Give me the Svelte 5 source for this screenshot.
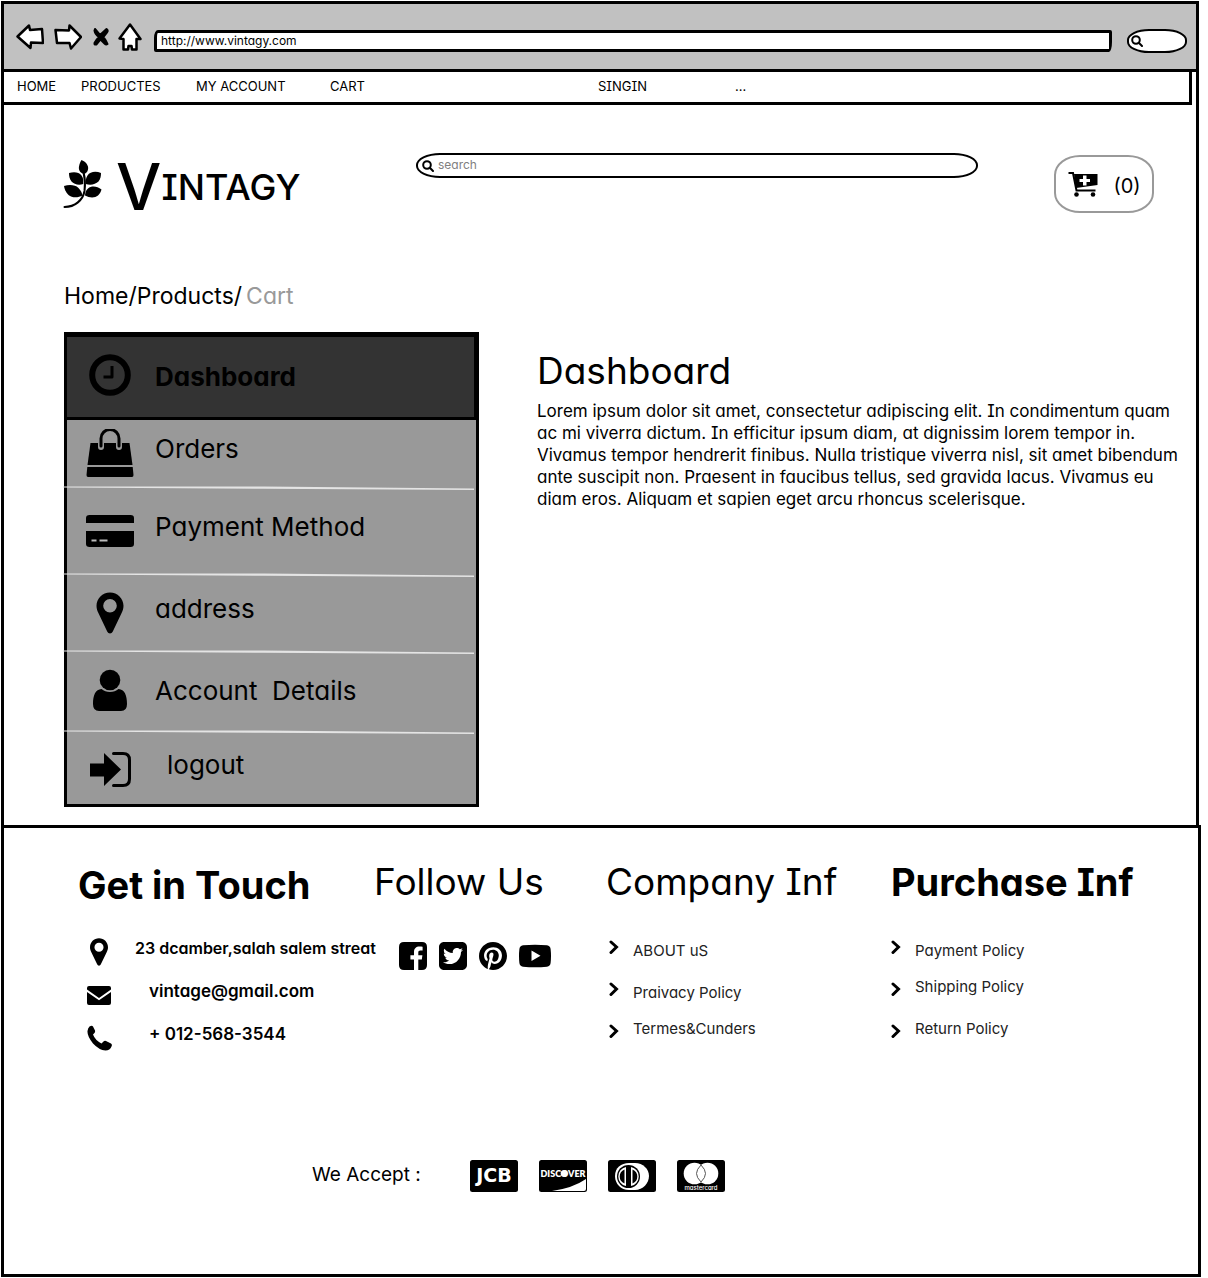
<script>
  const nav = ['HOME', 'PRODUCTES', 'MY ACCOUNT', 'CART', 'SINGIN', '...'];

  const account = [
    { label: 'Dashboard', icon: 'clock', size: 'h85', active: true },
    { label: 'Orders', icon: 'bag', size: 'h69' },
    { label: 'Payment Method', icon: 'card', size: 'h87' },
    { label: 'address', icon: 'pin', size: 'h77' },
    { label: 'Account  Details', icon: 'user', size: 'h80' },
    { label: 'logout', icon: 'exit', size: 'h71', indent: true }
  ];

  const contacts = [
    { label: '23 dcamber,salah salem streat', icon: 'pin' },
    { label: 'vintage@gmail.com', icon: 'mail', href: 'mailto:vintage@gmail.com' },
    { label: '+ 012-568-3544', icon: 'phone', href: 'tel:0125683544' }
  ];

  const company = [
    { label: 'ABOUT uS', shift: 'low' },
    { label: 'Praivacy Policy', shift: 'low' },
    { label: 'Termes&Cunders', shift: 'high' }
  ];

  const purchase = [
    { label: 'Payment Policy', shift: 'low' },
    { label: 'Shipping Policy', shift: 'high' },
    { label: 'Return Policy', shift: 'high' }
  ];
</script>

{#snippet magnifier()}
  <svg class="magnifier" viewBox="0 0 12 12" aria-hidden="true">
    <circle cx="5" cy="5" r="3.8" />
    <path d="M7.8 7.8L11 11" />
  </svg>
{/snippet}

{#snippet links(list, flush)}
  <ul class="links" class:flush>
    {#each list as item}
      <li>
        <svg class="chevron" viewBox="0 0 10 14" aria-hidden="true"><path d="M2 2L7.5 7L2 12.5" /></svg>
        <a class={item.shift} href="#top">{item.label}</a>
      </li>
    {/each}
  </ul>
{/snippet}

{#snippet pin()}
  <svg viewBox="0 0 48 48" aria-hidden="true">
    <path fill-rule="evenodd" d="M24 3.5c-7.600 0-13.500 6-13.500 13.300 0 3 .8 5 2 7.500l8.700 18.200c1.200 2.600 4.400 2.600 5.600 0l8.700-18.200c1.200-2.500 2-4.500 2-7.500C37.500 9.500 31.600 3.500 24 3.500zm0 6.500a6.800 6.800 0 1 1 0 13.600a6.800 6.800 0 1 1 0-13.600z" />
  </svg>
{/snippet}

<div class="page" id="top">
  <div class="window">
    <header class="chrome">
      <div class="buttons">
        <button aria-label="Back">
          <svg width="28" height="26" viewBox="0 0 28 26"><path class="outline" d="M1.500 12.500L13 1.500L14 6L26 5L27 19L15 18.500L14.500 24z" /></svg>
        </button>
        <button aria-label="Forward">
          <svg width="28" height="26" viewBox="0 0 28 26"><path class="outline" d="M1.500 6L15 6.500L15.500 1.500L27 13L17 24.500L15.500 19L3 19z" /></svg>
        </button>
        <button aria-label="Stop" class="stop">
          <svg width="18" height="22" viewBox="0 0 18 22"><path class="cross" d="M3 3L8 9L14.500 3Q16.500 4.500 15 6.500L11.500 11Q14.500 15 15.500 18Q14 19 12.500 17.500L8.500 13.500L4.500 18.500Q2 19 2.500 17Q4 14 7 11Q3 8 2.500 4.500z" /></svg>
        </button>
        <button aria-label="Home">
          <svg width="24" height="28" viewBox="0 0 24 28"><path class="outline" d="M12 1.500L22.500 16L18.500 16L18.500 26.500L14 26.500L13.500 23L10.500 23L10 26.500L5.500 26.500L5.500 16L1.500 15.500z" /></svg>
        </button>
      </div>
      <input class="address" aria-label="Address" value="http://www.vintagy.com" />
      <label class="quick">
        {@render magnifier()}
        <input aria-label="Quick search" />
      </label>
    </header>

    <nav class="menu" aria-label="Main">
      {#each nav as item}<a href="#top">{item}</a>{/each}
    </nav>

    <main>
      <div class="masthead">
        <a class="logo" href="#top" aria-label="Vintagy">
          <svg class="leaf" width="40" height="50" viewBox="0 0 40 50" aria-hidden="true">
            <path class="stem" d="M1.500 47C12 47 20 40 21.500 31C22.500 24 22 18 20.500 12" />
            <path d="M18.500 0C22.500 1.500 26 5.500 25 9.500C24.500 12 23 13.500 20.500 14C16.500 12.500 15.500 9.500 16 6.500C16.500 3.500 17.500 1.500 18.500 0z" />
            <path d="M6 13C11 11.500 16 12 18.500 15.500C20.500 18 20.500 21 20.300 24C16 25.500 11 24.500 8.500 21.500C6.500 19 6 16 6 13z" />
            <path d="M38 13C33 11 27 11.500 24.500 15.500C22.800 18 22.500 21 22.700 24C27.500 25.500 32.500 24.500 35.500 21.500C37.500 19 38 16 38 13z" />
            <path d="M1 26C6 24.500 12 24.500 15.500 28C18 30.500 19 33 19.500 35.500C15 38 9 38 5.500 35C2.500 32 1.500 29 1 26z" />
            <path d="M38.500 29.500C34 26 28.500 25.500 25 28.500C22.800 30.500 22 33 22 35.500C26.500 38 32 38 35 35.500C37 33.500 38 31.500 38.500 29.500z" />
          </svg>
          <span class="initial">V</span><span class="rest">INTAGY</span>
        </a>
        <label class="search">
          {@render magnifier()}
          <input type="search" placeholder="search" aria-label="Search" />
        </label>
        <button class="cart" aria-label="Cart, 0 items">
          <svg width="32" height="28" viewBox="0 0 32 28" aria-hidden="true">
            <path class="rail" d="M1.500 3H6L9.500 20.500H28.500" />
            <path fill-rule="evenodd" d="M7 4H30.500V15L9 18zM16 5.500V9H12.500V12H16V15.500H19.500V12H23V9H19.500V5.500z" />
            <circle cx="9.500" cy="24.500" r="2.300" /><circle cx="26" cy="24.500" r="2.300" />
          </svg>
          <span>(0)</span>
        </button>
      </div>

      <nav class="crumbs" aria-label="Breadcrumb">
        <a href="#top">Home</a>/<a href="#top">Products</a>/<span>Cart</span>
      </nav>

      <div class="content">
        <nav class="sidebar" aria-label="Account">
          {#each account as item, i}
            <a href="#top" class="{item.size}" class:active={item.active} class:indent={item.indent}>
              {#if item.icon === 'pin'}
                {@render pin()}
              {:else}
                <svg viewBox="0 0 48 48" aria-hidden="true">
                  {#if item.icon === 'clock'}
                    <circle class="line thick" cx="24" cy="24" r="17.800" />
                    <path class="line" d="M26 15V26H17.500" />
                  {:else if item.icon === 'bag'}
                    <path d="M4.500 14H43.500L46.500 36H1.500z" />
                    <path d="M1.300 38H46.700L47.500 46Q47.500 48 46 48H2Q.5 48 .5 46z" />
                    <path class="halo" d="M15 18V9.500a9 9 0 0 1 18 0V18" />
                    <path class="line thin" d="M15 17V9.500a9 9 0 0 1 18 0V17" />
                  {:else if item.icon === 'card'}
                    <path d="M3.500 8H44.500Q48 8 48 11V16H0V11Q0 8 3.500 8z" />
                    <path d="M0 24H48V37Q48 40 44.500 40H3.500Q0 40 0 37z" />
                    <path class="cut" d="M5.500 33.500H10.500M13.500 33.500H21.500" />
                  {:else if item.icon === 'user'}
                    <circle cx="24" cy="13" r="10.300" />
                    <path d="M15.500 22Q19 25 24 25T32.500 22C38.500 22.500 41 28 41 37Q41 44 35 44H13Q7 44 7 37C7 28 9.500 22.500 15.500 22z" />
                  {:else}
                    <path d="M4 18.500H18V8L35 24.500L18 41V31.500H4z" />
                    <path class="line thin" d="M27.500 8.500H37Q43.500 8.500 43.500 15V34Q43.500 40.500 37 40.500H27.500" />
                  {/if}
                </svg>
              {/if}
              <span>{item.label}</span>
              {#if i > 0 && i < account.length - 1}
                <svg class="rule" viewBox="0 0 410 4" preserveAspectRatio="none" aria-hidden="true">
                  <path d="M0 .5L200 .5L410 2.500V4L200 2.700L0 1.500z" />
                </svg>
              {/if}
            </a>
          {/each}
        </nav>

        <article>
          <h1>Dashboard</h1>
          <p>
            Lorem ipsum dolor sit amet, consectetur adipiscing elit. In condimentum quam<br />
            ac mi viverra dictum. In efficitur ipsum diam, at dignissim lorem tempor in.<br />
            Vivamus tempor hendrerit finibus. Nulla tristique viverra nisl, sit amet bibendum<br />
            ante suscipit non. Praesent in faucibus tellus, sed gravida lacus. Vivamus eu<br />
            diam eros. Aliquam et sapien eget arcu rhoncus scelerisque.
          </p>
        </article>
      </div>
    </main>
  </div>

  <footer>
    <div class="columns">
      <section class="touch">
        <h2 class="bold">Get in Touch</h2>
        <ul class="contacts">
          {#each contacts as item}
            <li>
              {#if item.icon === 'pin'}
                {@render pin()}
              {:else if item.icon === 'mail'}
                <svg viewBox="0 0 26 26" aria-hidden="true">
                  <path d="M1 6Q1 4 3 4H23Q25 4 25 6V7.500L13 16L1 7.500zM1 10L13 18.300L25 10V21Q25 23 23 23H3Q1 23 1 21z" />
                </svg>
              {:else}
                <svg viewBox="0 0 26 26" aria-hidden="true">
                  <path d="M3.500 1.500Q6 0 7 1.500L9 5.500Q9.500 7 8 8.500L7 9.500Q9 15 15.500 18.500L17.500 16.500Q18.500 15.500 20 16L25 18.500Q26.500 19.500 25.500 21.500Q24 25.500 19.500 25.500Q13 25 7 18.500Q1 11 1.500 6Q1.800 3 3.500 1.500z" />
                </svg>
              {/if}
              {#if item.href}<a href={item.href}>{item.label}</a>{:else}<span>{item.label}</span>{/if}
            </li>
          {/each}
        </ul>
      </section>

      <section>
        <h2>Follow Us</h2>
        <div class="social">
          <a href="#top" aria-label="Facebook">
            <svg width="28" height="28" viewBox="0 0 28 28"><path fill-rule="evenodd" d="M5 0H23Q28 0 28 5V23Q28 28 23 28H19.300V17.500H22.800L23.400 13.300H19.300V10.500C19.300 9.200 19.800 8.500 21.400 8.500H23.600V4.700C23.200 4.600 21.800 4.500 20.400 4.500C17.200 4.500 15 6.400 15 9.900V13.300H11.400V17.500H15V28H5Q0 28 0 23V5Q0 0 5 0z" /></svg>
          </a>
          <a href="#top" aria-label="Twitter">
            <svg width="28" height="28" viewBox="0 32 448 448"><path d="M368 32H80C36 32 0 68 0 112v288c0 44 36 80 80 80h288c44 0 80-36 80-80V112c0-44-36-80-80-80zm-16.900 158.800c.2 2.800.2 5.700.2 8.500 0 86.700-66 186.600-186.600 186.600-37.200 0-71.700-10.800-100.700-29.400 5.300.6 10.400.8 15.800.8 30.700 0 58.900-10.400 81.400-28-28.800-.6-53-19.500-61.300-45.500 10.100 1.500 19.200 1.500 29.600-1.200-30-6.100-52.500-32.500-52.500-64.400v-.8c8.700 4.900 18.900 7.900 29.600 8.300a65.447 65.447 0 0 1-29.200-54.600c0-12.200 3.200-23.400 8.900-33.100 32.300 39.800 80.800 65.800 135.200 68.600-9.300-44.500 24-80.600 64-80.600 18.900 0 35.900 7.900 47.900 20.700 14.800-2.800 29-8.300 41.600-15.800-4.900 15.200-15.200 28-28.800 36.100 13.200-1.400 26-5.100 37.800-10.200-8.900 13.100-20.100 24.700-32.900 34z" /></svg>
          </a>
          <a href="#top" aria-label="Pinterest">
            <svg width="28" height="28" viewBox="0 8 496 496"><path d="M496 256c0 137-111 248-248 248-25.600 0-50.200-3.900-73.400-11.100 10.100-16.500 25.200-43.500 30.800-65 3-11.600 15.400-59 15.400-59 8.100 15.400 31.700 28.500 56.800 28.500 74.800 0 128.700-68.800 128.700-154.300 0-81.900-66.900-143.200-152.900-143.200-107 0-163.900 71.800-163.900 150.100 0 36.400 19.400 81.700 50.300 96.100 4.700 2.200 7.200 1.200 8.300-3.300.8-3.400 5-20.300 6.900-28.100.6-2.500.3-4.700-1.700-7.100-10.100-12.500-18.300-35.300-18.300-56.600 0-54.700 41.400-107.600 112-107.600 60.900 0 103.600 41.500 103.600 100.900 0 67.100-33.900 113.600-78 113.600-24.300 0-42.600-20.100-36.700-44.800 7-29.500 20.500-61.300 20.500-82.600 0-19-10.200-34.900-31.400-34.900-24.900 0-44.900 25.700-44.900 60.200 0 22 7.400 36.800 7.400 36.800s-24.500 103.800-29 123.200c-5 21.400-3 51.600-.9 71.200C65.400 450.900 0 361.100 0 256 0 119 111 8 248 8s248 111 248 248z" /></svg>
          </a>
          <a href="#top" aria-label="YouTube">
            <svg width="32" height="24" viewBox="0 0 32 24"><path fill-rule="evenodd" d="M4 1.300Q16 0 28 1.300Q31.200 1.700 31.600 5Q32.400 12 31.600 19Q31.200 22.200 28 22.700Q16 24 4 22.700Q.8 22.200.4 19Q-.4 12 .4 5Q.8 1.700 4 1.300zM12.500 6.500V17L21.500 11.800z" /></svg>
          </a>
        </div>
      </section>

      <section>
        <h2>Company Inf</h2>
        {@render links(company, false)}
      </section>

      <section>
        <h2 class="bold">Purchase Inf</h2>
        {@render links(purchase, true)}
      </section>
    </div>

    <div class="payments">
      <span>We Accept :</span>
      <svg viewBox="0 0 48 32" role="img" aria-label="JCB">
        <rect width="48" height="32" rx="2.500" />
        <text class="jcb" x="24" y="22">JCB</text>
      </svg>
      <svg viewBox="0 0 48 32" role="img" aria-label="Discover">
        <rect width="48" height="32" rx="2.500" />
        <text class="discover" x="24" y="17">DISCOVER</text>
        <circle class="white" cx="25" cy="13.500" r="3.300" />
        <path class="white" d="M13 31Q34 28 47 19V29Q47 31 45 31z" />
      </svg>
      <svg viewBox="0 0 48 32" role="img" aria-label="Diners Club">
        <rect width="48" height="32" rx="2.500" />
        <path class="white" d="M21 3H27C35 3 41 9 41 16S35 30 27 30H21C13 30 7 24 7 16S13 3 21 3z" />
        <circle cx="20.500" cy="16.500" r="11.500" />
        <path class="white" d="M18 7V26A9.700 9.700 0 0 1 18 7zM23 7V26A9.700 9.700 0 0 0 23 7z" />
        <path d="M16.500 9.500V23.500A7.500 7.500 0 0 1 16.500 9.500zM24.500 9.500V23.500A7.500 7.500 0 0 0 24.500 9.500z" />
      </svg>
      <svg viewBox="0 0 48 32" role="img" aria-label="MasterCard">
        <rect width="48" height="32" rx="2.500" />
        <circle class="white" cx="17.500" cy="13.500" r="10.800" />
        <circle class="white" cx="30.500" cy="13.500" r="10.800" />
        <path class="lens" d="M24 5Q19.500 9.500 19.500 13.500T24 22Q28.500 17.500 28.500 13.500T24 5z" />
        <text class="master" x="24" y="30">mastercard</text>
      </svg>
    </div>
  </footer>
</div>

<style>
  :global(body) {
    background: #fff;
  }

  .page,
  .page button,
  .page input {
    font-family: Inter, 'Liberation Sans', sans-serif;
    font-feature-settings: 'cv11', 'cv08';
    color: #000;
  }

  .page {
    padding: 1px 7px 1px 1px;
  }

  .page *,
  .page {
    box-sizing: border-box;
  }

  a {
    color: inherit;
    text-decoration: none;
  }

  ul {
    list-style: none;
    margin: 0;
    padding: 0;
  }

  button {
    background: none;
    border: 0;
    padding: 0;
  }

  svg {
    display: block;
    flex: none;
  }

  input {
    background: none;
    border: 0;
    outline: 0;
    padding: 0;
    min-width: 0;
  }

  .window {
    margin-right: 2px;
    border: 3px solid #000;
    border-bottom: 0;
  }

  /* browser chrome */
  .chrome {
    display: flex;
    align-items: center;
    height: 68px;
    padding: 8px 9px 0 12px;
    background: #c1c1c1;
    border-bottom: 3px solid #000;
  }

  .buttons {
    display: flex;
    align-items: center;
    gap: 10px;
    padding-bottom: 8px;
    margin-right: 12px;
  }

  .stop {
    margin-right: -2px;
  }

  .cross {
    stroke: #000;
    stroke-width: 2;
    stroke-linejoin: round;
  }

  .outline {
    fill: #fff;
    stroke: #000;
    stroke-width: 2.5;
    stroke-linejoin: round;
  }

  .address {
    flex: 1;
    height: 22px;
    padding: 0 4px;
    border: 3px solid #000;
    border-radius: 4px 2px 3px 2px / 8px 2px 10px 2px;
    background: #fff;
    font-size: 12px;
  }

  .quick {
    display: flex;
    align-items: center;
    width: 60px;
    height: 24px;
    margin-left: 15px;
    padding-left: 2px;
    border: 2px solid #000;
    border-radius: 22px / 11px;
    background: #fff;
  }

  .quick input {
    width: 100%;
  }

  .magnifier {
    width: 12px;
    height: 12px;
    fill: none;
    stroke: #000;
    stroke-width: 2;
    stroke-linecap: round;
  }

  /* site menu */
  .menu {
    display: grid;
    grid-template-columns: 64px 115px 134px 268px 137px 1fr;
    align-items: center;
    height: 36px;
    margin: -3px 4px 0 -3px;
    padding: 0 0 2px 13px;
    border: 3px solid #000;
    background: #fff;
    font-size: 13px;
  }

  main {
    padding: 48px 0 18px 60px;
  }

  .masthead {
    display: grid;
    grid-template-columns: 352px minmax(0, 562px) 1fr;
    height: 62px;
    margin-right: 42px;
  }

  .logo {
    display: flex;
    align-items: center;
    height: 68px;
    margin-right: auto;
    line-height: 68px;
    font-weight: 500;
  }

  .leaf {
    margin: 0 13px 4px -1px;
  }

  .initial {
    font-size: 64px;
  }

  .rest {
    font-size: 36px;
  }

  .search {
    display: flex;
    align-items: center;
    gap: 4px;
    height: 25px;
    padding-left: 4px;
    border: 2px solid #000;
    border-radius: 24px / 12px;
  }

  .search input {
    flex: 1;
    font-size: 12px;
    padding-bottom: 2px;
  }

  .search input::placeholder {
    color: #808080;
    opacity: 1;
  }

  .cart {
    display: flex;
    align-items: center;
    justify-content: center;
    gap: 14px;
    width: 100px;
    height: 58px;
    margin: 2px 0 0 auto;
    border: 2px solid #999;
    border-radius: 26px / 20px;
    font-size: 20px;
  }

  .cart span {
    padding-top: 4px;
  }

  .rail {
    fill: none;
    stroke: #000;
    stroke-width: 2;
  }

  .stem {
    fill: none;
    stroke: #000;
    stroke-width: 2;
    stroke-linecap: round;
  }

  .crumbs {
    margin: 66px 0 21px;
    font-size: 23px;
    line-height: 30px;
  }

  .crumbs span {
    margin-left: 4px;
    color: #999;
  }

  .content {
    display: grid;
    grid-template-columns: 415px 1fr;
    column-gap: 58px;
  }

  /* account menu */
  .sidebar {
    border: 3px solid #000;
    background: #999;
  }

  .sidebar a {
    position: relative;
    display: flex;
    align-items: center;
    gap: 21px;
    padding: 0 0 4px 19px;
    font-size: 26px;
    line-height: 32px;
    white-space: pre;
  }

  .sidebar a > svg:first-child {
    width: 48px;
    height: 48px;
  }

  .sidebar span {
    padding-bottom: 8px;
  }

  .sidebar .active {
    border: 2px solid #000;
    border-width: 2px 2px 3px 0;
    background: #333;
    font-weight: 700;
  }

  .sidebar .active span {
    padding: 4px 0 0;
  }

  .sidebar .h80 span {
    padding: 0;
  }

  .sidebar .indent {
    gap: 33px;
    padding-bottom: 0;
  }

  .h85 {
    height: 85px;
  }

  .h69 {
    height: 69px;
  }

  .h87 {
    height: 87px;
  }

  .h77 {
    height: 77px;
  }

  .h80 {
    height: 80px;
  }

  .h71 {
    height: 71px;
  }

  .rule {
    position: absolute;
    left: -4px;
    bottom: -1px;
    width: calc(100% + 2px);
    height: 4px;
    fill: #e4e4e4;
  }

  .line {
    fill: none;
    stroke: #000;
    stroke-width: 3;
    stroke-linejoin: round;
  }

  .thick {
    stroke-width: 6;
  }

  .thin {
    stroke-width: 3;
    stroke-linecap: round;
  }

  .halo {
    fill: none;
    stroke: #999;
    stroke-width: 6;
    stroke-linecap: round;
  }

  .cut {
    fill: none;
    stroke: #bbb;
    stroke-width: 2;
  }

  h1,
  h2 {
    margin: 0;
    font-size: 37px;
    font-weight: 400;
  }

  h1 {
    margin-top: 17px;
    line-height: 44px;
  }

  article p {
    margin: 7px 0 0;
    font-size: 17px;
    line-height: 22px;
  }

  footer {
    padding: 31px 0 82px 74px;
    border: 3px solid #000;
    background: #fff;
  }

  .columns {
    display: grid;
    grid-template-columns: 296px 232px 285px 1fr;
    height: 194px;
  }

  h2 {
    line-height: 46px;
    white-space: nowrap;
  }

  .bold {
    font-size: 38px;
    font-weight: 700;
  }

  .touch {
    padding-top: 3px;
  }

  .contacts {
    margin-top: 22px;
    padding-left: 8px;
  }

  .contacts li {
    display: flex;
    align-items: center;
    gap: 23px;
    height: 43px;
    font-size: 16px;
    font-weight: 600;
    white-space: nowrap;
  }

  .contacts a,
  .contacts span {
    padding-bottom: 8px;
  }

  .contacts a {
    margin-left: 14px;
    font-size: 17px;
  }

  .contacts svg {
    width: 26px;
    height: 26px;
  }

  .contacts li:first-child svg {
    width: 32px;
    height: 32px;
    margin: 0 -3px;
  }

  .social {
    display: flex;
    align-items: center;
    gap: 12px;
    margin: 37px 0 0 25px;
  }

  .links {
    margin-top: 21px;
    padding-left: 3px;
  }

  .flush {
    padding-left: 0;
  }

  .links li {
    display: flex;
    align-items: center;
    gap: 14px;
    height: 42px;
    color: #222;
    font-size: 15px;
  }

  .low {
    padding-top: 6px;
  }

  .high {
    padding-bottom: 6px;
  }

  .chevron {
    width: 10px;
    height: 14px;
    fill: none;
    stroke: #000;
    stroke-width: 3;
    stroke-linecap: round;
  }

  .payments {
    display: flex;
    align-items: center;
    gap: 21px;
    margin: 107px 0 0 234px;
    font-size: 19px;
  }

  .payments span {
    margin-right: 28px;
    line-height: 28px;
    padding-bottom: 2px;
  }

  .payments svg {
    width: 48px;
    height: 32px;
  }

  .white,
  .payments text {
    fill: #fff;
  }

  .payments text {
    text-anchor: middle;
    font-family: Inter, sans-serif;
    font-weight: 800;
  }

  .payments .jcb {
    font-family: 'DejaVu Sans', sans-serif;
    font-size: 19px;
  }

  .payments .discover {
    font-family: Lato, sans-serif;
    font-size: 9px;
  }

  .payments .master {
    font-size: 6px;
    font-weight: 500;
  }

  .lens {
    fill: none;
    stroke: #555;
    stroke-width: 1;
  }
</style>
